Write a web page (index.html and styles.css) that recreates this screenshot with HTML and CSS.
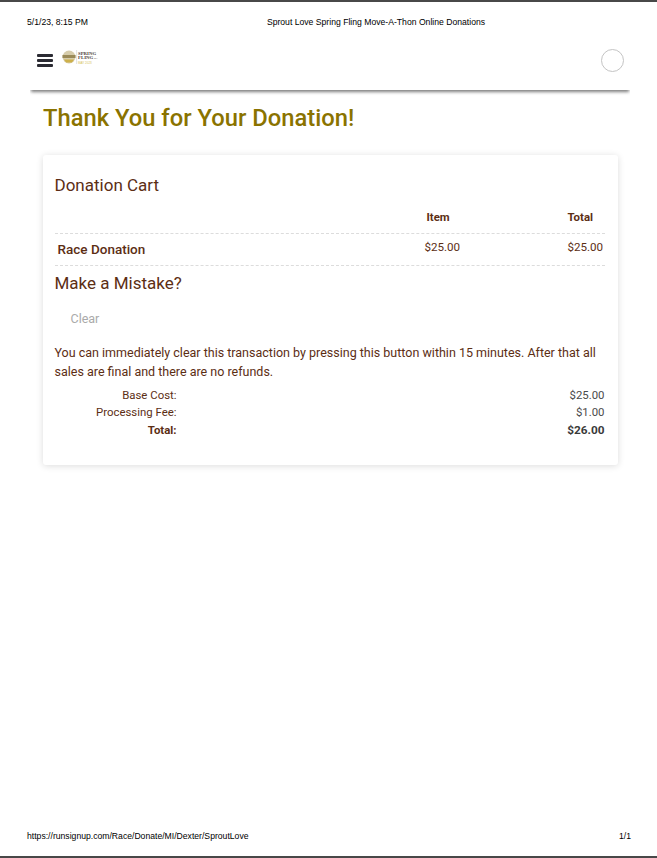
FILE: index.html
```html
<!DOCTYPE html>
<html lang="en">
<head>
  <meta charset="UTF-8">
  <meta name="viewport" content="width=device-width, initial-scale=1.0">
  <title>Sprout Love Spring Fling Move-A-Thon Online Donations</title>
  <link rel="stylesheet" href="styles.css">
</head>
<body>
  <div class="page">
    <!-- Print header -->
    <div class="print-head">
      <span class="print-date">5/1/23, 8:15 PM</span>
      <span class="print-title">Sprout Love Spring Fling Move-A-Thon Online Donations</span>
    </div>

    <!-- Site nav -->
    <div class="nav">
      <div class="hamburger"><span></span><span></span><span></span></div>
      <svg class="logo" width="36" height="16" viewBox="0 0 36 16">
        <circle cx="7" cy="8" r="6.5" fill="#d6ccab"/>
        <rect x="0.5" y="6" width="13" height="3" fill="#9a8a58"/>
        <path d="M2 10.5h10l-2 3h-6z" fill="#cdb04a"/>
        <line x1="14.6" y1="1" x2="14.6" y2="15" stroke="#cfcfcf" stroke-width="0.6"/>
        <text x="16" y="5.5" class="logo-text">SPRING</text>
        <text x="16" y="10" class="logo-text">FLING</text>
        <text x="31.8" y="10" class="logo-mark">'23</text>
        <text x="16" y="14.5" class="logo-date">MAY 2023</text>
      </svg>
      <div class="avatar"></div>
    </div>

    <h1>Thank You for Your Donation!</h1>

    <!-- Donation card -->
    <div class="card">
      <h2 class="cart-title">Donation Cart</h2>
      <div class="cart-row cart-head">
        <div></div>
        <div class="col-item">Item</div>
        <div class="col-total">Total</div>
      </div>
      <div class="cart-row cart-line">
        <div class="line-name">Race Donation</div>
        <div class="col-item">$25.00</div>
        <div class="col-total">$25.00</div>
      </div>

      <h2 class="mistake-title">Make a Mistake?</h2>
      <div class="clear-btn">Clear</div>
      <p class="note">You can immediately clear this transaction by pressing this button within 15 minutes. After that all sales are final and there are no refunds.</p>

      <div class="sum-row"><span class="sum-label">Base Cost:</span><span class="sum-value">$25.00</span></div>
      <div class="sum-row"><span class="sum-label">Processing Fee:</span><span class="sum-value">$1.00</span></div>
      <div class="sum-row sum-total"><span class="sum-label">Total:</span><span class="sum-value">$26.00</span></div>
    </div>

    <!-- Print footer -->
    <div class="print-foot">
      <span>https://runsignup.com/Race/Donate/MI/Dexter/SproutLove</span>
      <span>1/1</span>
    </div>
  </div>
</body>
</html>
```

FILE: styles.css
```css
html, body {
  margin: 0;
  padding: 0;
  background-color: #fff;
}

.page {
  box-sizing: border-box;
  height: 858px;
  border-top: 2px solid #484848;
  border-bottom: 2px solid #484848;
  display: flex;
  flex-direction: column;
  font-family: Roboto, sans-serif;
  color: #5c2e14;
  overflow: hidden;
}

/* Print header and footer */
.print-head {
  display: flex;
  height: 11px;
  margin-top: 15px;
  padding-left: 27px;
  font-family: "Liberation Sans", Arial, sans-serif;
  font-size: 8.64px;
  line-height: 11px;
  color: #000;
}

.print-title {
  margin-left: 179px;
}

.print-foot {
  display: flex;
  justify-content: space-between;
  margin: auto 26px 14px 27px;
  font-family: "Liberation Sans", Arial, sans-serif;
  font-size: 8.64px;
  line-height: 11px;
  color: #000;
}

/* Nav bar */
.nav {
  display: flex;
  align-items: center;
  box-sizing: border-box;
  width: 600px;
  height: 62px;
  margin: 0 0 0 30px;
  padding: 2px 6px 0 7px;
  box-shadow: 0 3px 3px -1px rgba(0, 0, 0, 0.5);
  clip-path: inset(0 0 -6px 0); /* Shadow only below the bar */
}

.hamburger {
  display: flex;
  flex-direction: column;
  gap: 2px;
  width: 16px;
}

.hamburger span {
  display: block;
  height: 3px;
  background-color: #2b2b33;
  border-radius: 1px;
}

.logo {
  margin: -7px 0 0 9px;
}

.logo-text {
  font-family: "Liberation Serif", serif;
  font-size: 4.8px;
  font-weight: 700;
  fill: #4a4038;
}

.logo-mark {
  font-family: "Liberation Serif", serif;
  font-size: 2.8px;
  fill: #4a4038;
}

.logo-date {
  font-family: "Liberation Sans", sans-serif;
  font-size: 3px;
  fill: #d6c25a;
}

.avatar {
  box-sizing: border-box;
  width: 23px;
  height: 23px;
  margin-left: auto;
  border: 1px solid #c4c4c4;
  border-radius: 50%;
}

h1 {
  margin: 14px 0 0 43px;
  font-size: 23.75px;
  line-height: 29px;
  font-weight: 500;
  color: #8a7300;
}

/* Card */
.card {
  box-sizing: border-box;
  width: 575px;
  height: 310px;
  margin: 22px 0 0 42.5px;
  padding: 20px 13px 0 12px;
  border-radius: 3px;
  box-shadow: 0 1px 7px rgba(0, 0, 0, 0.14);
}

h2 {
  margin: 0;
  font-size: 17px;
  line-height: 20px;
  font-weight: 400;
}

.cart-row {
  display: grid;
  grid-template-columns: 1fr 106px 74px;
  font-size: 11.6px;
  border-bottom: 1px dashed #dcdcdc;
}

.cart-head {
  height: 26px;
  margin-top: 12px;
  font-size: 11.4px;
  line-height: 21px;
  font-weight: 700;
}

.cart-head .col-item {
  padding-left: 2px;
}

.cart-line {
  height: 31px;
  line-height: 27px;
}

.col-total {
  padding-left: 37px;
  white-space: nowrap;
}

.line-name {
  padding-left: 3px;
  font-size: 13.5px;
  line-height: 30px;
  font-weight: 500;
}

.mistake-title {
  margin-top: 7px;
}

.clear-btn {
  margin: 18px 0 0 16px;
  font-size: 12.5px;
  line-height: 16px;
  color: #aaa;
}

.note {
  margin: 16px 0 0 0;
  font-size: 12.5px;
  line-height: 19px;
}

.sum-row {
  display: flex;
  justify-content: space-between;
  font-size: 11.4px;
  line-height: 17px;
}

.note + .sum-row {
  margin-top: 6px;
}

.sum-label {
  width: 122px;
  text-align: right;
}

.sum-value {
  color: #4a4a4a;
}

.sum-total {
  font-weight: 700;
  line-height: 18px;
}

.sum-total .sum-value {
  font-size: 11.8px;
  color: #3a3a3a;
}
```
